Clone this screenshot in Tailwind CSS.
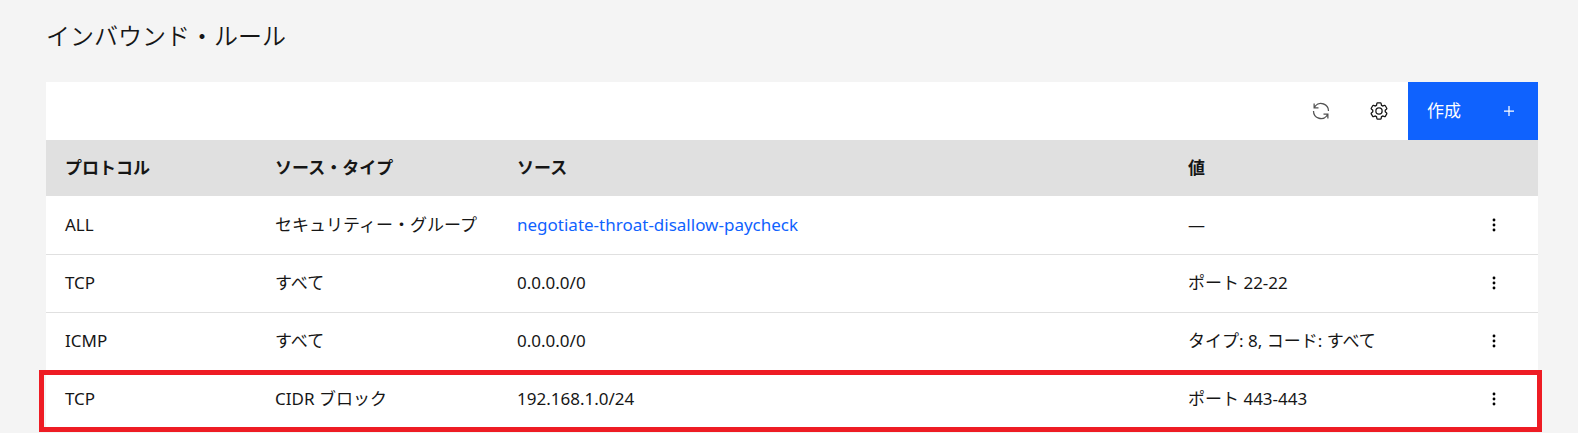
<!DOCTYPE html>
<html lang="ja">

<head>
    <meta charset="UTF-8">
    <meta name="viewport" content="width=device-width, initial-scale=1.0">
    <script src="https://cdn.jsdelivr.net/npm/@tailwindcss/browser@4"></script>
    <title>インバウンド・ルール</title>
</head>

<body class="min-h-screen bg-[#f4f4f4] text-[#161616] font-['Noto_Sans','Noto_Sans_CJK_JP',sans-serif] text-[17px] leading-6">
    <!-- icons -->
    <svg class="hidden">
        <symbol id="icon-kebab" viewBox="0 0 32 32">
            <circle cx="16" cy="8" r="2.3" />
            <circle cx="16" cy="16" r="2.3" />
            <circle cx="16" cy="24" r="2.3" />
        </symbol>
    </svg>

    <main class="pl-[46px] pr-10 pt-5">
        <h1 class="text-2xl font-[350] leading-8 mb-[30px]">インバウンド・ルール</h1>

        <section class="bg-white">
            <div class="flex justify-end h-[58px]">
                <button type="button" aria-label="更新" class="w-[58px] flex items-center justify-center text-[#525252] hover:bg-gray-100">
                    <svg class="size-5" viewBox="0 0 32 32" fill="currentColor">
                        <path d="M12 10H6.78A11 11 0 0127 16h2A13 13 0 006 7.68V4H4v8h8zM20 22h5.22A11 11 0 015 16H3a13 13 0 0023 8.32V28h2v-8h-8z" />
                    </svg>
                </button>
                <button type="button" aria-label="設定" class="w-[58px] flex items-center justify-center hover:bg-gray-100">
                    <svg class="size-5" viewBox="0 0 32 32" fill="currentColor">
                        <path d="M27,16.76c0-.25,0-.5,0-.76s0-.51,0-.77l1.92-1.68A2,2,0,0,0,29.3,11L26.94,7a2,2,0,0,0-1.73-1,2,2,0,0,0-.64.1l-2.43.82a11.35,11.35,0,0,0-1.31-.75l-.51-2.52a2,2,0,0,0-2-1.61H13.64a2,2,0,0,0-2,1.61l-.51,2.52a11.48,11.48,0,0,0-1.32.75L7.43,6.06A2,2,0,0,0,6.79,6,2,2,0,0,0,5.06,7L2.7,11a2,2,0,0,0,.41,2.51L5,15.24c0,.25,0,.5,0,.76s0,.51,0,.77L3.11,18.45A2,2,0,0,0,2.7,21L5.06,25a2,2,0,0,0,1.73,1,2,2,0,0,0,.64-.1l2.43-.82a11.35,11.35,0,0,0,1.31.75l.51,2.52a2,2,0,0,0,2,1.61h4.72a2,2,0,0,0,2-1.61l.51-2.52a11.48,11.48,0,0,0,1.32-.75l2.42.82a2,2,0,0,0,.64.1,2,2,0,0,0,1.73-1L29.3,21a2,2,0,0,0-.41-2.51ZM25.21,24l-3.43-1.16a8.86,8.86,0,0,1-2.71,1.57L18.36,28H13.64l-.71-3.55a9.36,9.36,0,0,1-2.7-1.57L6.79,24,4.43,20l2.72-2.4a8.9,8.9,0,0,1,0-3.13L4.43,12,6.79,8l3.43,1.16a8.86,8.86,0,0,1,2.71-1.57L13.64,4h4.72l.71,3.55a9.36,9.36,0,0,1,2.7,1.57L25.21,8,27.57,12l-2.72,2.4a8.9,8.9,0,0,1,0,3.13L27.57,20Z" />
                        <path d="M16,22a6,6,0,1,1,6-6A5.94,5.94,0,0,1,16,22Zm0-10a3.91,3.91,0,0,0-4,4,3.91,3.91,0,0,0,4,4,3.91,3.91,0,0,0,4-4A3.91,3.91,0,0,0,16,12Z" />
                    </svg>
                </button>
                <button type="button" class="w-[130px] px-[19px] flex items-center justify-between bg-[#0f62fe] text-white hover:bg-blue-700">
                    作成
                    <svg class="size-5" viewBox="0 0 32 32" fill="currentColor">
                        <path d="M17 15V8h-2v7H8v2h7v7h2v-7h7v-2z" />
                    </svg>
                </button>
            </div>

            <table class="w-full table-fixed border-collapse text-left">
                <colgroup>
                    <col class="w-[210px]">
                    <col class="w-[242px]">
                    <col>
                    <col class="w-[281px]">
                    <col class="w-[88px]">
                </colgroup>
                <thead>
                    <tr class="h-14 bg-[#e0e0e0]">
                        <th scope="col" class="px-[19px] font-semibold">プロトコル</th>
                        <th scope="col" class="px-[19px] font-semibold">ソース・タイプ</th>
                        <th scope="col" class="px-[19px] font-semibold">ソース</th>
                        <th scope="col" class="px-[19px] font-semibold">値</th>
                        <td></td>
                    </tr>
                </thead>
                <tbody>
                    <tr class="h-[58px] border-b border-[#e0e0e0]">
                        <td class="px-[19px]">ALL</td>
                        <td class="px-[19px] whitespace-nowrap">セキュリティー・グループ</td>
                        <td class="px-[19px]"><a href="#" class="text-[#0f62fe] hover:underline">negotiate-throat-disallow-paycheck</a></td>
                        <td class="px-[19px]">—</td>
                        <td>
                            <button type="button" aria-label="メニュー" class="flex mx-auto"><svg class="size-5"><use href="#icon-kebab" /></svg></button>
                        </td>
                    </tr>
                    <tr class="h-[58px] border-b border-[#e0e0e0]">
                        <td class="px-[19px]">TCP</td>
                        <td class="px-[19px]">すべて</td>
                        <td class="px-[19px]">0.0.0.0/0</td>
                        <td class="px-[19px]">ポート 22-22</td>
                        <td>
                            <button type="button" aria-label="メニュー" class="flex mx-auto"><svg class="size-5"><use href="#icon-kebab" /></svg></button>
                        </td>
                    </tr>
                    <tr class="h-[58px] border-b border-[#e0e0e0]">
                        <td class="px-[19px]">ICMP</td>
                        <td class="px-[19px]">すべて</td>
                        <td class="px-[19px]">0.0.0.0/0</td>
                        <td class="px-[19px]">タイプ: 8, コード: すべて</td>
                        <td>
                            <button type="button" aria-label="メニュー" class="flex mx-auto"><svg class="size-5"><use href="#icon-kebab" /></svg></button>
                        </td>
                    </tr>
                    <tr class="relative h-[58px] border-b border-[#e0e0e0]">
                        <td class="px-[19px]">TCP</td>
                        <td class="px-[19px]">CIDR ブロック</td>
                        <td class="px-[19px]">192.168.1.0/24</td>
                        <td class="px-[19px]">ポート 443-443</td>
                        <td>
                            <button type="button" aria-label="メニュー" class="flex mx-auto"><svg class="size-5"><use href="#icon-kebab" /></svg></button>
                            <!-- highlight frame around the new rule -->
                            <span class="absolute top-0 -bottom-[5px] -left-[7px] -right-1 border-5 border-[#ee1c24] pointer-events-none"></span>
                        </td>
                    </tr>
                </tbody>
            </table>
        </section>
    </main>
</body>

</html>
